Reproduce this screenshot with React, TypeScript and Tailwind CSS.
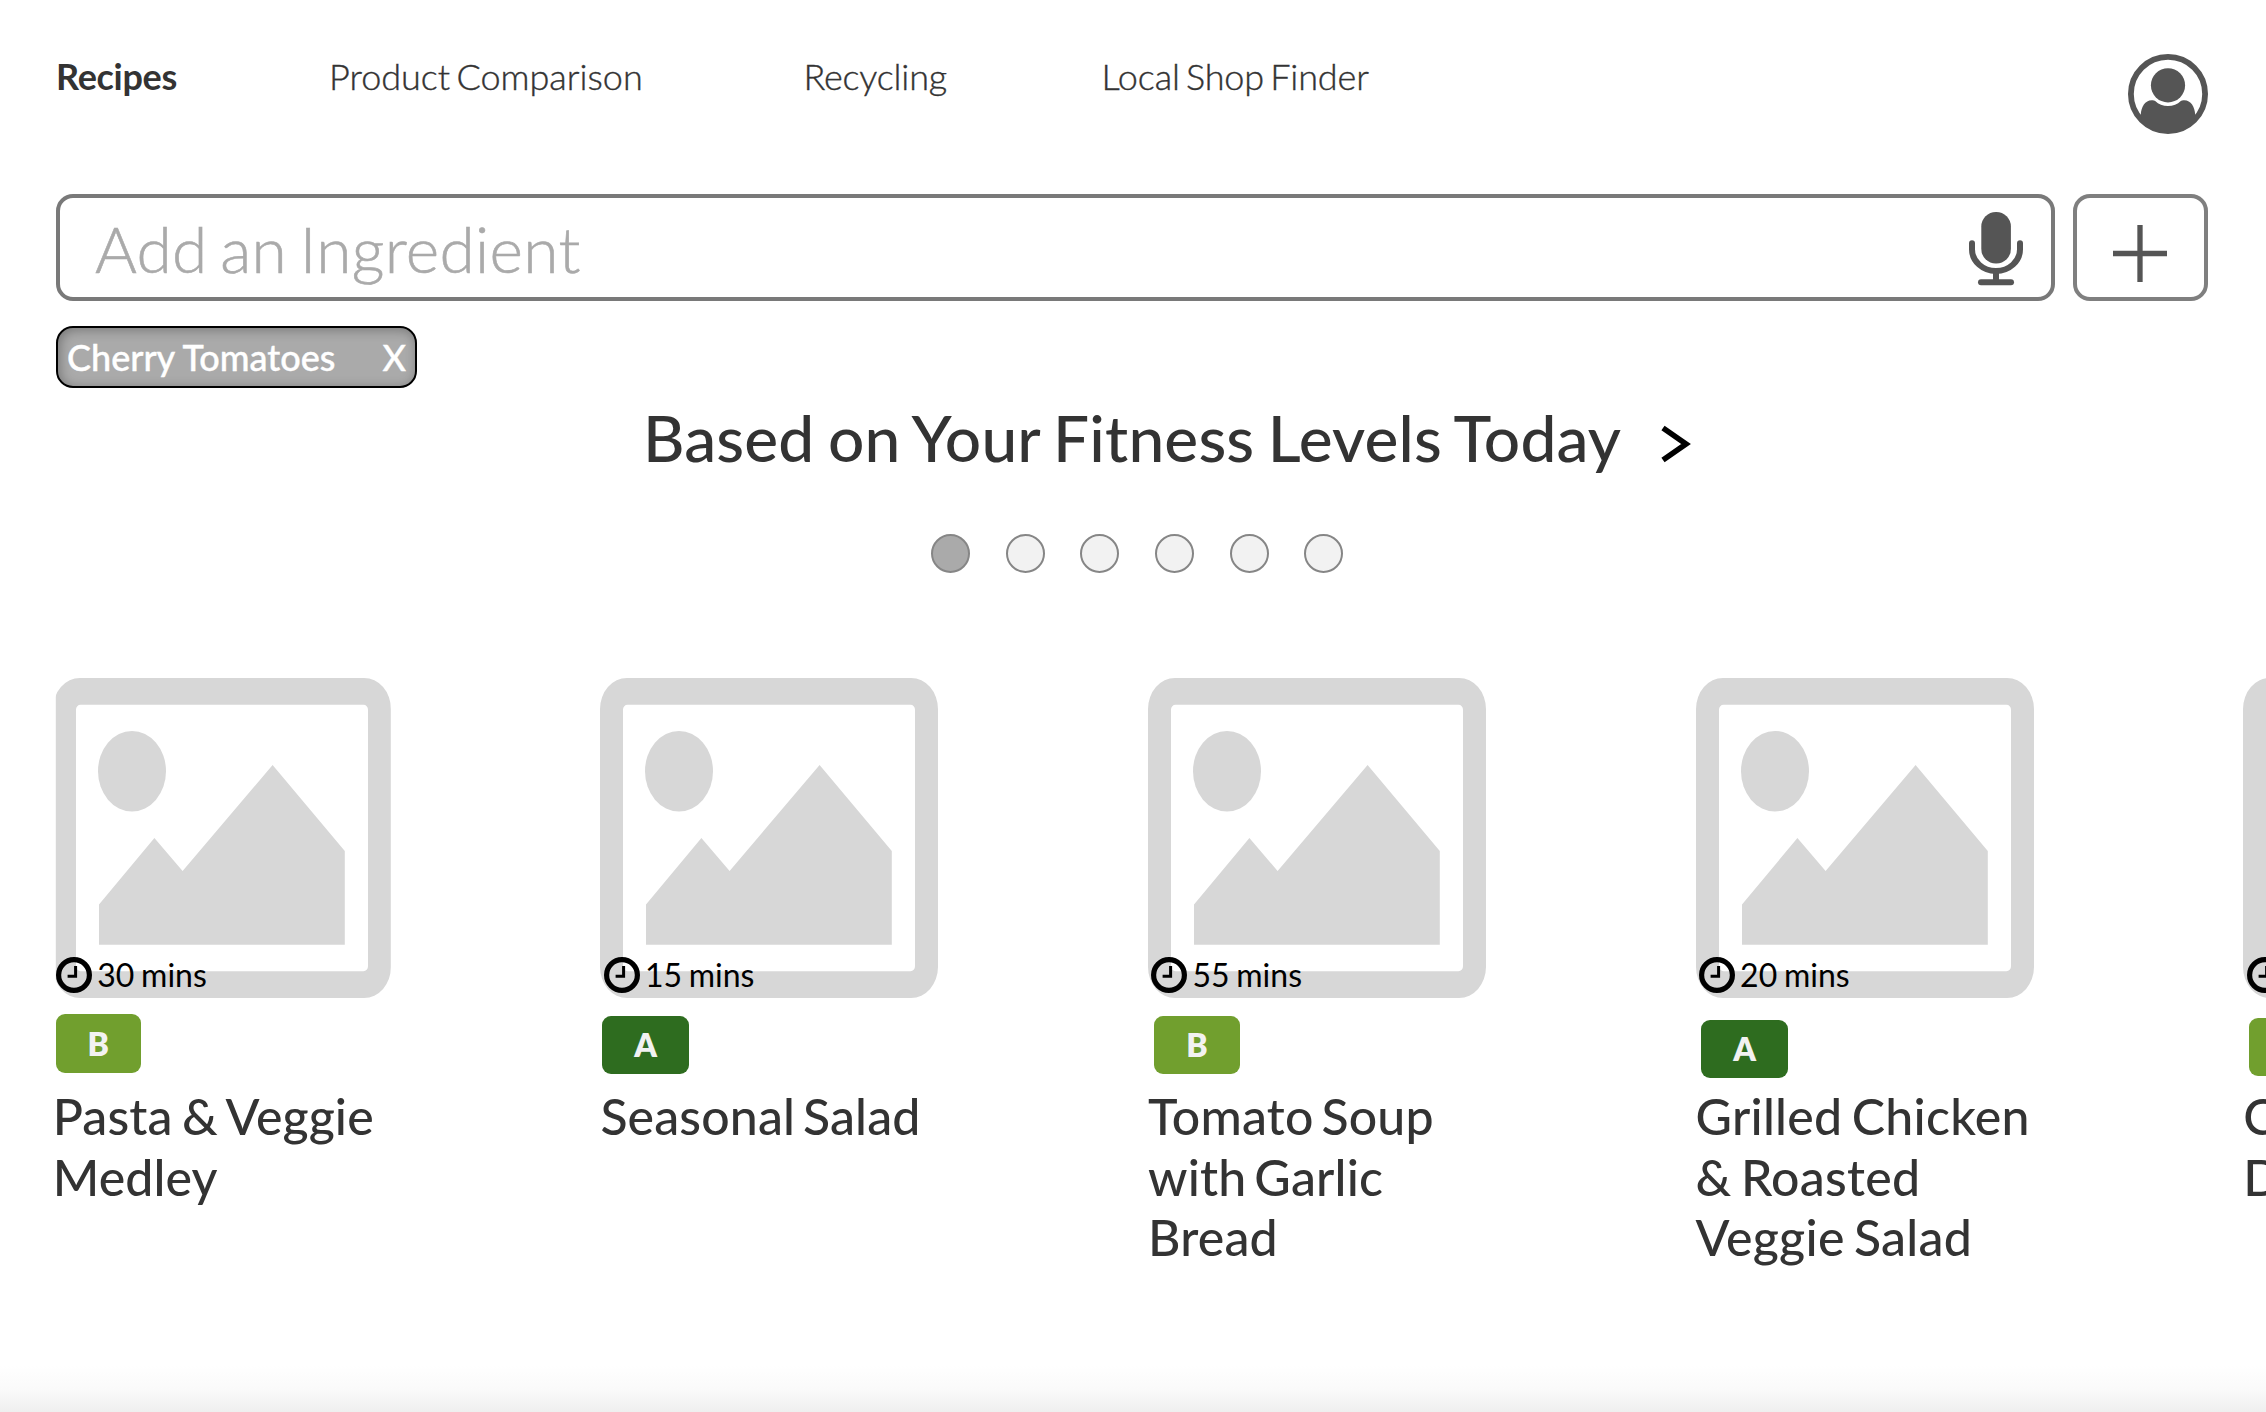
type Grade = "A" | "B";

interface Recipe {
  title: string[];
  time: string;
  grade: Grade;
  imageClass: string;
  badgeClass: string;
  titleClass: string;
}

const recipes: Recipe[] = [
  { title: ["Pasta & Veggie", "Medley"], time: "30 mins", grade: "B", imageClass: "[clip-path:inset(0_0_0_3px)]", badgeClass: "mt-[16px] ml-[3px] h-[59px] w-[85px]", titleClass: "mt-[13px] tracking-[0.1px] [word-spacing:-3.2px]" },
  { title: ["Seasonal Salad"], time: "15 mins", grade: "A", imageClass: "", badgeClass: "mt-[18px] ml-[1.8px] h-[58px] w-[87px]", titleClass: "mt-[12px] tracking-[0.15px] [word-spacing:-5px]" },
  { title: ["Tomato Soup", "with Garlic", "Bread"], time: "55 mins", grade: "B", imageClass: "", badgeClass: "mt-[18px] ml-[6px] h-[58px] w-[86px]", titleClass: "mt-[12px] tracking-[0.2px] [word-spacing:-5px]" },
  { title: ["Grilled Chicken", "& Roasted", "Veggie Salad"], time: "20 mins", grade: "A", imageClass: "", badgeClass: "mt-[22px] ml-[5.5px] h-[58px] w-[87px]", titleClass: "mt-[8px] tracking-[0.25px] [word-spacing:-3.5px]" },
  { title: ["C", "D"], time: "", grade: "B", imageClass: "", badgeClass: "mt-[20px] ml-[6px] h-[58px] w-[87px]", titleClass: "mt-[10px]" },
];

function UserIcon() {
  return (
    <svg width="80" height="80" viewBox="0 0 80 80" fill="#555">
      <circle cx="40" cy="40" r="37.1" fill="none" stroke="#555" strokeWidth="5.8" />
      <circle cx="40" cy="31.3" r="17.1" />
      <path d="M12.8 60.5C13.2 53 17 46.3 23.8 46.2C25.2 46.1 26.4 46.3 27.2 47C30.5 50.3 35 52 40 52C45 52 49.5 50.3 52.8 47C53.6 46.3 54.8 46.1 56.2 46.2C63 46.3 66.8 53 67.2 60.5L66 68A38 38 0 0 1 14 68Z" />
    </svg>
  );
}

function MicIcon() {
  return (
    <svg width="54" height="74" viewBox="0 0 54 74" className="mt-[2px]" fill="none" stroke="#555" strokeWidth="6" strokeLinecap="round">
      <rect x="12.3" y="0" width="29.6" height="51.5" rx="14.6" fill="#555" stroke="none" />
      <path d="M3 31.3V37.3A24 21.7 0 0 0 51 37.3V31.3" />
      <path d="M27 59V70" strokeLinecap="butt" />
      <path d="M12 70.3H42" />
    </svg>
  );
}

function ClockIcon() {
  return (
    <svg width="36" height="36" viewBox="0 0 36 36" className="shrink-0" fill="none" stroke="#000">
      <circle cx="18" cy="18" r="15.4" strokeWidth="5.2" />
      <path d="M19.6 9V19.2H11.6" strokeWidth="3" />
    </svg>
  );
}

function PlaceholderImage({ className }: { className: string }) {
  return (
    <svg width="338" height="320" viewBox="0 0 338 320" className={`block ${className}`} fill="#d7d7d7">
      <path
        fillRule="evenodd"
        d="M27 0H311A27 31 0 0 1 338 31V289A27 31 0 0 1 311 320H27A27 31 0 0 1 0 289V31A27 31 0 0 1 27 0ZM27.5 26.7A4.5 5 0 0 0 23 31.7V288.3A4.5 5 0 0 0 27.5 293.3H310.5A4.5 5 0 0 0 315 288.3V31.7A4.5 5 0 0 0 310.5 26.7Z"
      />
      <ellipse cx="79" cy="93.2" rx="34" ry="40.3" />
      <path d="M46 226.5L101.4 160L129.6 193L219.6 87L291.8 173V266.7H46Z" />
    </svg>
  );
}

function RecipeCard({ recipe }: { recipe: Recipe }) {
  return (
    <article className="w-[547.6px] shrink-0">
      <div className="relative w-[338px]">
        <PlaceholderImage className={recipe.imageClass} />
        <div className="absolute top-[278px] left-[3.5px] flex h-[38px] items-center gap-[5px] text-[32px] leading-[38px] text-black">
          <ClockIcon />
          <span className="whitespace-nowrap [word-spacing:-1.5px]">{recipe.time}</span>
        </div>
      </div>
      <div
        className={`${recipe.badgeClass} ${recipe.grade === "A" ? "bg-[#2e6c1f]" : "bg-[#719f2e]"} flex items-center justify-center rounded-[9px] text-[32px] font-extrabold text-[#f2f2f2]`}
      >
        {recipe.grade}
      </div>
      <h2 className={`${recipe.titleClass} text-[50px] leading-[60.6px] font-medium whitespace-nowrap`}>
        {recipe.title.map((line) => (
          <span key={line} className="block">{line}</span>
        ))}
      </h2>
    </article>
  );
}

export default function App() {
  return (
    <div className="flex h-[1412px] w-[2266px] flex-col overflow-hidden bg-white font-['Lato',sans-serif] text-[#333]">
      <header className="flex h-[194px] shrink-0 items-start justify-between pr-[58px] pl-[56px]">
        <nav className="flex pt-[54px] text-[36px] leading-[44px] font-light whitespace-nowrap [word-spacing:-3.5px] [-webkit-text-stroke:0.4px_#333]">
          <a className="w-[273px] font-bold tracking-[-0.3px] [-webkit-text-stroke:0]">Recipes</a>
          <a className="w-[474.5px]">Product Comparison</a>
          <a className="w-[298px] tracking-[-0.2px]">Recycling</a>
          <a className="tracking-[-0.12px]">Local Shop Finder</a>
        </nav>
        <div className="pt-[54px]">
          <UserIcon />
        </div>
      </header>

      <div className="flex h-[107px] shrink-0 gap-[18px] pr-[58px] pl-[56px]">
        <div className="flex w-[1999px] items-center justify-between rounded-[17px] border-4 border-[#797979] pr-[28px] pl-[35px]">
          <span className="pt-[2px] text-[64px] leading-[77px] font-light tracking-[0.3px] text-[#aaa] [word-spacing:-5px] [-webkit-text-stroke:0.6px_#aaa]">Add an Ingredient</span>
          <MicIcon />
        </div>
        <button className="flex w-[135px] items-center justify-center rounded-[17px] border-4 border-[#7f7f7f]">
          <svg width="54" height="57" viewBox="0 0 54 57" className="mt-[11px] mr-[2px]" stroke="#555" strokeWidth="5.3">
            <path d="M27 0V57M0 28.5H54" />
          </svg>
        </button>
      </div>

      <div className="mt-[25px] ml-[56px] flex h-[62px] w-[361px] shrink-0 items-center justify-between rounded-[17px] border-2 border-black bg-[#aaa] pr-[9px] pl-[9px] text-[36px] leading-[44px] font-medium text-white shadow-[inset_2px_2px_12px_rgba(0,0,0,0.3)] [-webkit-text-stroke:0.4px_white]">
        <span>Cherry Tomatoes</span>
        <span>X</span>
      </div>

      <div className="mt-[11px] ml-[643px] flex h-[77px] shrink-0 items-center text-[64px] leading-[77px]">
        <h1 className="w-[1016px] font-medium tracking-[0.15px] whitespace-nowrap [word-spacing:-2.8px]">Based on Your Fitness Levels Today</h1>
        <svg width="32" height="38" viewBox="0 0 32 38" className="mt-[12px]" fill="none" stroke="#000" strokeWidth="5.6">
          <path d="M4 3L27 19L4 35" />
        </svg>
      </div>

      <div className="mt-[58px] ml-[931px] flex shrink-0 gap-[35.7px]">
        {[0, 1, 2, 3, 4, 5].map((i) => (
          <span key={i} className={`${i === 0 ? "bg-[#aaa]" : "bg-[#f2f2f2]"} size-[39px] rounded-full border-2 border-[#868686]`} />
        ))}
      </div>

      <div className="mt-[105px] flex-1 overflow-hidden pl-[52.8px]">
        <div className="flex">
          {recipes.map((recipe) => (
            <RecipeCard key={recipe.title[0]} recipe={recipe} />
          ))}
        </div>
      </div>
      <div className="h-[46px] shrink-0 bg-linear-to-b from-white via-[#fafafa] to-[#efefef]" />
    </div>
  );
}
